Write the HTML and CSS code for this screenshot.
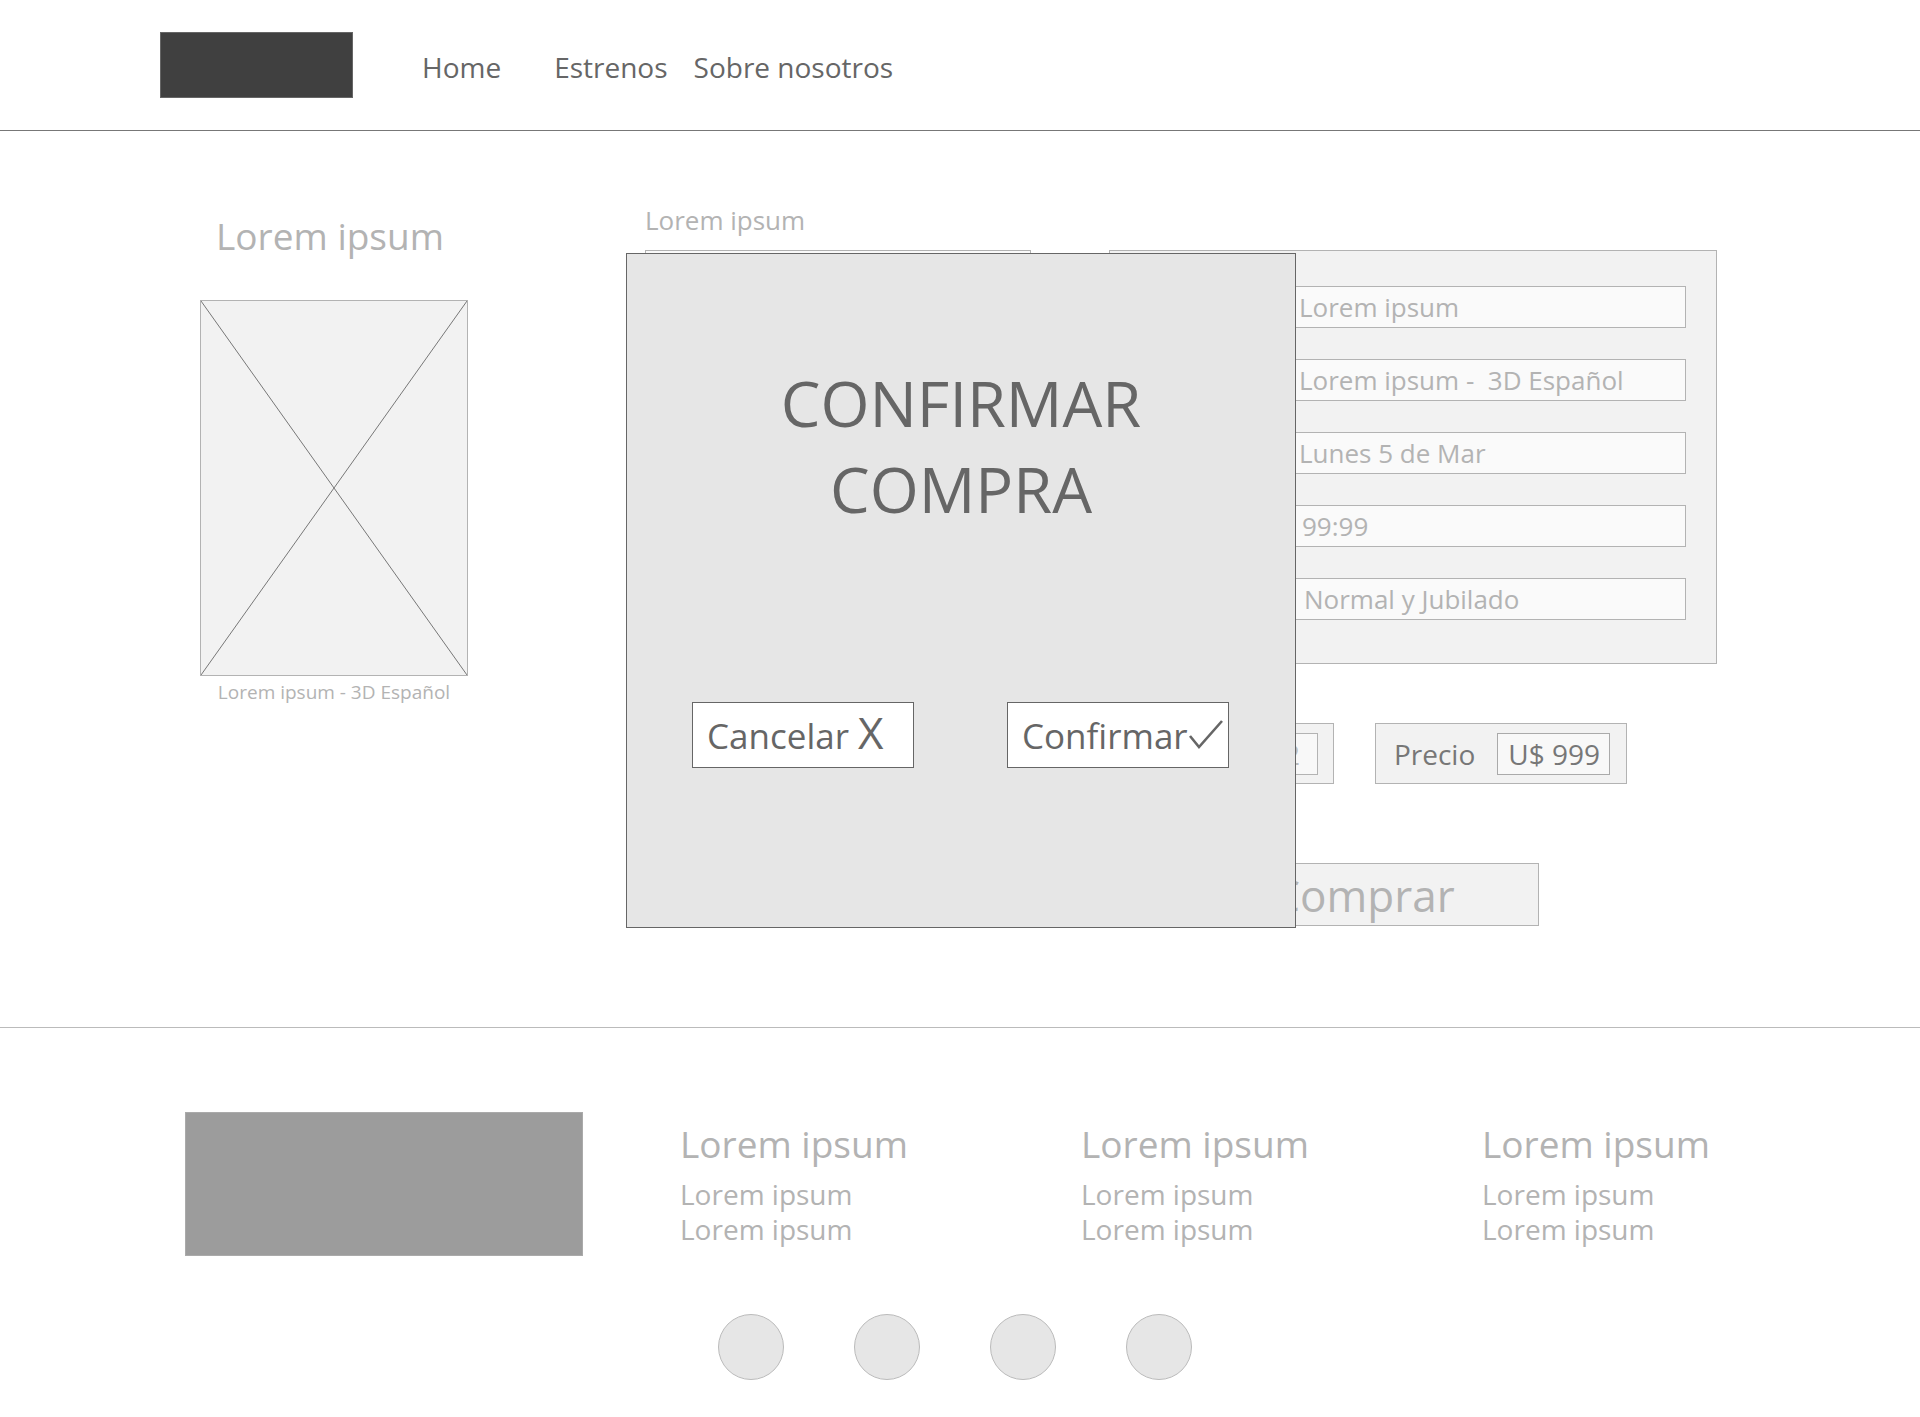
FILE: index.html
```html
<!DOCTYPE html>
<html lang="es">

<head>
    <meta charset="UTF-8">
    <meta name="viewport" content="width=device-width, initial-scale=1.0">
    <title>Confirmar compra</title>
    <link rel="stylesheet" href="styles.css">
</head>

<body>
    <header class="topbar">
        <div class="logo"></div>
        <nav class="menu">
            <a href="#" class="menu-home">Home</a>
            <a href="#" class="menu-estrenos">Estrenos</a>
            <a href="#" class="menu-sobre">Sobre nosotros</a>
        </nav>
    </header>

    <main class="compra">
        <section class="pelicula">
            <h2 class="pelicula-titulo">Lorem ipsum</h2>
            <div class="poster">
                <svg class="poster-x" viewBox="0 0 100 100" preserveAspectRatio="none">
                    <line x1="0" y1="0" x2="100" y2="100" vector-effect="non-scaling-stroke"></line>
                    <line x1="100" y1="0" x2="0" y2="100" vector-effect="non-scaling-stroke"></line>
                </svg>
            </div>
            <p class="poster-caption">Lorem ipsum - 3D Español</p>
        </section>

        <section class="formulario">
            <div class="fila-datos">
                <div class="campo-cine">
                    <label class="campo-label">Lorem ipsum</label>
                    <div class="caja-cine"></div>
                </div>
                <div class="panel-datos">
                    <div class="dato"><span class="dato-label">Cine</span><span class="dato-valor">Lorem ipsum</span></div>
                    <div class="dato"><span class="dato-label">Película</span><span class="dato-valor">Lorem ipsum -&nbsp; 3D Español</span></div>
                    <div class="dato"><span class="dato-label">Día</span><span class="dato-valor">Lunes 5 de Mar</span></div>
                    <div class="dato"><span class="dato-label">Horario</span><span class="dato-valor dato-hora">99:99</span></div>
                    <div class="dato"><span class="dato-label">Entradas</span><span class="dato-valor dato-tipo">Normal y Jubilado</span></div>
                </div>
            </div>

            <div class="fila-totales">
                <div class="caja-total cantidad">
                    <span class="total-label">Cantidad</span>
                    <span class="total-valor valor-cantidad">2</span>
                </div>
                <div class="caja-total precio">
                    <span class="total-label">Precio</span>
                    <span class="total-valor">U$ 999</span>
                </div>
            </div>

            <div class="fila-comprar">
                <button class="btn-comprar">Comprar</button>
            </div>
        </section>

        <!-- ventana de confirmacion encima del formulario -->
        <div class="modal">
            <h1 class="modal-titulo">CONFIRMAR<br>COMPRA</h1>
            <div class="modal-botones">
                <button class="btn-modal">Cancelar <span class="btn-x">X</span></button>
                <button class="btn-modal">Confirmar<svg class="btn-check" viewBox="0 0 36 30">
                        <polyline points="2,17 11,28 34,2"></polyline>
                    </svg></button>
            </div>
        </div>
    </main>

    <footer class="pie">
        <div class="pie-fila">
            <div class="pie-logo"></div>
            <div class="pie-col">
                <h3>Lorem ipsum</h3>
                <p>Lorem ipsum</p>
                <p>Lorem ipsum</p>
            </div>
            <div class="pie-col">
                <h3>Lorem ipsum</h3>
                <p>Lorem ipsum</p>
                <p>Lorem ipsum</p>
            </div>
            <div class="pie-col">
                <h3>Lorem ipsum</h3>
                <p>Lorem ipsum</p>
                <p>Lorem ipsum</p>
            </div>
        </div>
        <div class="redes">
            <span class="red"></span>
            <span class="red"></span>
            <span class="red"></span>
            <span class="red"></span>
        </div>
    </footer>
</body>

</html>
```

FILE: styles.css
```css
* {
    box-sizing: border-box;
}

body {
    margin: 0;
    font-family: "Open Sans", "Noto Sans", sans-serif;
    background: #fff;
    color: #666;
}

h1, h2, h3, p {
    margin: 0;
    font-weight: normal;
}

/* cabecera */
.topbar {
    height: 131px;
    border-bottom: 1px solid #777;
    display: flex;
    align-items: center;
    padding-left: 160px;
}

.logo {
    width: 193px;
    height: 66px;
    background: #404040;
    border: 1px solid #666;
}

.menu {
    display: flex;
    padding-top: 4px;
}

.menu a {
    color: #666;
    text-decoration: none;
    font-size: 28px;
    line-height: 38px;
}

.menu-home {
    margin-left: 69px;
}

.menu-estrenos {
    margin-left: 53px;
}

.menu-sobre {
    margin-left: 26px;
}

/* cuerpo */
.compra {
    position: relative;
    height: 897px;
    border-bottom: 1px solid #bbb;
    display: flex;
    align-items: flex-start;
    padding-left: 200px;
}

.pelicula {
    width: 268px;
    margin-top: 80px;
    text-align: center;
}

.pelicula-titulo {
    font-size: 37px;
    line-height: 50px;
    color: #b3b3b3;
    margin-left: -8px;
}

.poster {
    margin-top: 39px;
    height: 376px;
    background: #f2f2f2;
    border: 1px solid #b3b3b3;
}

.poster-x {
    display: block;
    width: 100%;
    height: 100%;
}

.poster-x line {
    stroke: #777;
    stroke-width: 1;
}

.poster-caption {
    margin-top: 3px;
    font-size: 19px;
    line-height: 26px;
    color: #b3b3b3;
}

.formulario {
    margin-left: 177px;
    margin-top: 72px;
    width: 1072px;
}

.fila-datos {
    display: flex;
    align-items: flex-start;
}

.campo-cine {
    width: 386px;
}

.campo-label {
    display: block;
    font-size: 26px;
    line-height: 34px;
    color: #b3b3b3;
    margin-bottom: 13px;
}

.caja-cine {
    height: 42px;
    background: #fafafa;
    border: 1px solid #b3b3b3;
}

.panel-datos {
    margin-left: 78px;
    margin-top: 47px;
    width: 608px;
    background: #f2f2f2;
    border: 1px solid #b3b3b3;
    padding: 35px 30px 43px 29px;
    display: flex;
    flex-direction: column;
    gap: 31px;
}

.dato {
    display: flex;
    align-items: center;
}

.dato-label {
    width: 151px;
    font-size: 26px;
    color: #b3b3b3;
}

.dato-valor {
    flex: 1;
    height: 42px;
    line-height: 40px;
    background: #fafafa;
    border: 1px solid #b3b3b3;
    padding-left: 8px;
    font-size: 26px;
    color: #b3b3b3;
    white-space: nowrap;
}

.dato-hora {
    padding-left: 11px;
}

.dato-tipo {
    padding-left: 13px;
}

.fila-totales {
    margin-top: 59px;
    display: flex;
    justify-content: flex-end;
    gap: 41px;
    padding-right: 90px;
}

.caja-total {
    display: flex;
    align-items: center;
    height: 61px;
    background: #f2f2f2;
    border: 1px solid #b3b3b3;
    padding: 0 16px 0 18px;
    font-size: 28px;
}

.total-label {
    color: #777;
    margin-right: 22px;
}

.total-valor {
    height: 42px;
    line-height: 40px;
    border: 1px solid #aaa;
    background: #f8f8f8;
    color: #777;
    padding: 0 9px 0 10px;
}

.cantidad {
    padding-right: 15px;
}

.cantidad .total-label {
    color: #b3b3b3;
}

.valor-cantidad {
    width: 60px;
    text-align: right;
    padding-right: 17px;
    color: #bbb;
    border-color: #b3b3b3;
}

.fila-comprar {
    margin-top: 79px;
    display: flex;
    justify-content: flex-end;
    padding-right: 178px;
}

.btn-comprar {
    width: 351px;
    height: 63px;
    background: #f2f2f2;
    border: 1px solid #b3b3b3;
    font-family: inherit;
    font-size: 44px;
    line-height: 58px;
    color: #b3b3b3;
    padding: 0;
}

/* modal */
.modal {
    position: absolute;
    left: 626px;
    top: 122px;
    width: 670px;
    height: 675px;
    background: #e6e6e6;
    border: 1px solid #666;
    padding-top: 106px;
}

.modal-titulo {
    text-align: center;
    font-size: 63px;
    line-height: 86px;
    color: #666;
}

.modal-botones {
    margin-top: 170px;
    display: flex;
    justify-content: space-between;
    padding: 0 66px 0 65px;
}

.btn-modal {
    display: flex;
    align-items: center;
    width: 222px;
    height: 66px;
    background: #fff;
    border: 1px solid #666;
    padding: 0 0 0 14px;
    font-family: inherit;
    font-size: 35px;
    color: #666;
    white-space: pre;
}

.btn-x {
    font-size: 44px;
    line-height: 44px;
    margin-top: -6px;
}

.btn-check {
    width: 36px;
    height: 30px;
    margin-left: 0;
    margin-top: -2px;
}

.btn-check polyline {
    fill: none;
    stroke: #666;
    stroke-width: 2.6;
}

/* pie */
.pie {
    padding-top: 84px;
}

.pie-fila {
    display: flex;
    align-items: flex-start;
    padding-left: 185px;
}

.pie-logo {
    width: 398px;
    height: 144px;
    background: #9c9c9c;
    border: 1px solid #aaa;
    margin-right: 97px;
}

.pie-col {
    width: 401px;
    margin-top: 7px;
    color: #b3b3b3;
}

.pie-col h3 {
    font-size: 37px;
    line-height: 50px;
    margin-bottom: 8px;
}

.pie-col p {
    font-size: 28px;
    line-height: 35px;
}

.redes {
    margin-top: 58px;
    display: flex;
    justify-content: center;
    gap: 70px;
    padding-right: 10px;
}

.red {
    width: 66px;
    height: 66px;
    border-radius: 50%;
    background: #e6e6e6;
    border: 1px solid #bbb;
}
```
